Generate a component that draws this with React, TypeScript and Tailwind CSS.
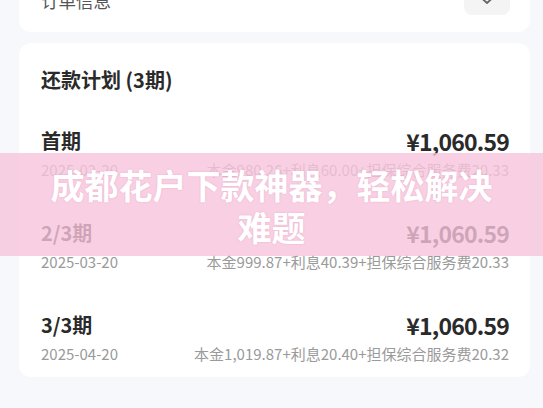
import React from "react";

const rows = [
  { label: "首期", date: "2025-02-20", detail: "本金980.26+利息60.00+担保综合服务费20.33" },
  { label: "2/3期", date: "2025-03-20", detail: "本金999.87+利息40.39+担保综合服务费20.33" },
  { label: "3/3期", date: "2025-04-20", detail: "本金1,019.87+利息20.40+担保综合服务费20.32" },
];

const Row = ({ label, date, detail }: { label: string; date: string; detail: string }) => (
  <div className="flex flex-col h-[92px]">
    <div className="flex items-center justify-between h-[30px]">
      <span className="text-[20px] font-bold text-[#2a2a2a]">{label}</span>
      <span className="text-[23px] font-bold text-[#2a2a2a] tracking-[-0.8px]">¥1,060.59</span>
    </div>
    <div className="flex items-center justify-between mt-[3px] h-[22px] text-[15px] text-[#9a9a9a]">
      <span>{date}</span>
      <span>{detail}</span>
    </div>
  </div>
);

export default function App() {
  return (
    <div
      className="relative w-[543px] h-[408px] overflow-hidden bg-[#f6f8fc]"
      style={{ fontFamily: '"Noto Sans CJK SC", "Noto Sans", sans-serif' }}
    >
      <div className="pl-[19px] pr-[13px] flex flex-col">
        <div className="mt-[-20px] h-[52px] bg-white rounded-b-xl flex items-start justify-between pl-[22px] pr-[20px]">
          <span className="text-[17.5px] text-[#555] leading-[24px] mt-[9px]">订单信息</span>
          <div className="w-[46px] h-[35px] rounded-lg bg-[#f4f4f5] flex items-end justify-center pb-[10px]">
            <svg width="14" height="8" viewBox="0 0 14 8" fill="none">
              <path d="M2 1.5 L7 6 L12 1.5" stroke="#666" strokeWidth="1.8" strokeLinecap="round" strokeLinejoin="round" />
            </svg>
          </div>
        </div>
        <div className="mt-[11px] bg-white rounded-xl pl-[22px] pr-[21px] pt-[22px] h-[334px]">
          <div className="text-[20px] font-bold text-[#2a2a2a] leading-[30px]">还款计划 (3期)</div>
          <div className="mt-[31px] flex flex-col">
            {rows.map((r) => (
              <Row key={r.label} {...r} />
            ))}
          </div>
        </div>
      </div>
      <div className="absolute left-0 right-0 top-[153px] h-[103px] bg-[rgba(248,196,220,0.8)] flex items-center justify-center">
        <div className="text-white font-bold text-[34px] leading-[42px] text-center px-[30px] mt-[2px] [text-shadow:0_0_2px_rgba(200,120,160,0.4)]">
          成都花户下款神器，轻松解决
          <br />
          难题
        </div>
      </div>
    </div>
  );
}
